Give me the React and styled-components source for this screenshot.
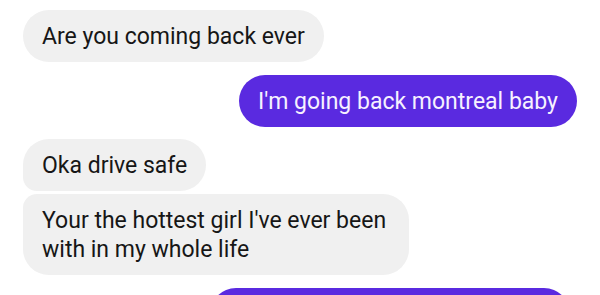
import React from "react";
import styled, { createGlobalStyle } from "styled-components";

const Global = createGlobalStyle`
  html, body { margin: 0; padding: 0; background: #ffffff; overflow: hidden; }
  body { font-family: Roboto, "Noto Sans", "Liberation Sans", sans-serif; }
`;

const Thread = styled.div`
  display: flex;
  flex-direction: column;
  padding: 10px 23px 0 23px;
  width: 600px;
  height: 295px;
  overflow: hidden;
  box-sizing: border-box;
`;

const Row = styled.div`
  display: flex;
  flex-shrink: 0;
  justify-content: ${(p) => (p.$out ? "flex-end" : "flex-start")};
  margin-top: ${(p) => p.$gap ?? 0}px;
  padding-right: ${(p) => p.$inset ?? 0}px;
`;

const Bubble = styled.div`
  box-sizing: border-box;
  max-width: 386px;
  min-height: 52px;
  padding: 11.5px 19px 11.5px 19px;
  font-size: 23px;
  line-height: 29px;
  border-radius: ${(p) => p.$radius || "26px"};
  background: ${(p) => (p.$out ? "#5a2ae0" : "#f0f0f0")};
  color: ${(p) => (p.$out ? "#f6f1ff" : "#161616")};
  width: ${(p) => (p.$width ? `${p.$width}px` : "auto")};
`;

export default function App() {
  return (
    <>
      <Global />
      <Thread>
        <Row>
          <Bubble>Are you coming back ever</Bubble>
        </Row>
        <Row $out $gap={13}>
          <Bubble $out>I'm going back montreal baby</Bubble>
        </Row>
        <Row $gap={12}>
          <Bubble $radius="26px 26px 26px 14px">Oka drive safe</Bubble>
        </Row>
        <Row $gap={3}>
          <Bubble $radius="14px 26px 26px 26px">
            Your the hottest girl I've ever been with in my whole life
          </Bubble>
        </Row>
        <Row $out $gap={13} $inset={7}>
          <Bubble $out $width={360}>&nbsp;</Bubble>
        </Row>
      </Thread>
    </>
  );
}
